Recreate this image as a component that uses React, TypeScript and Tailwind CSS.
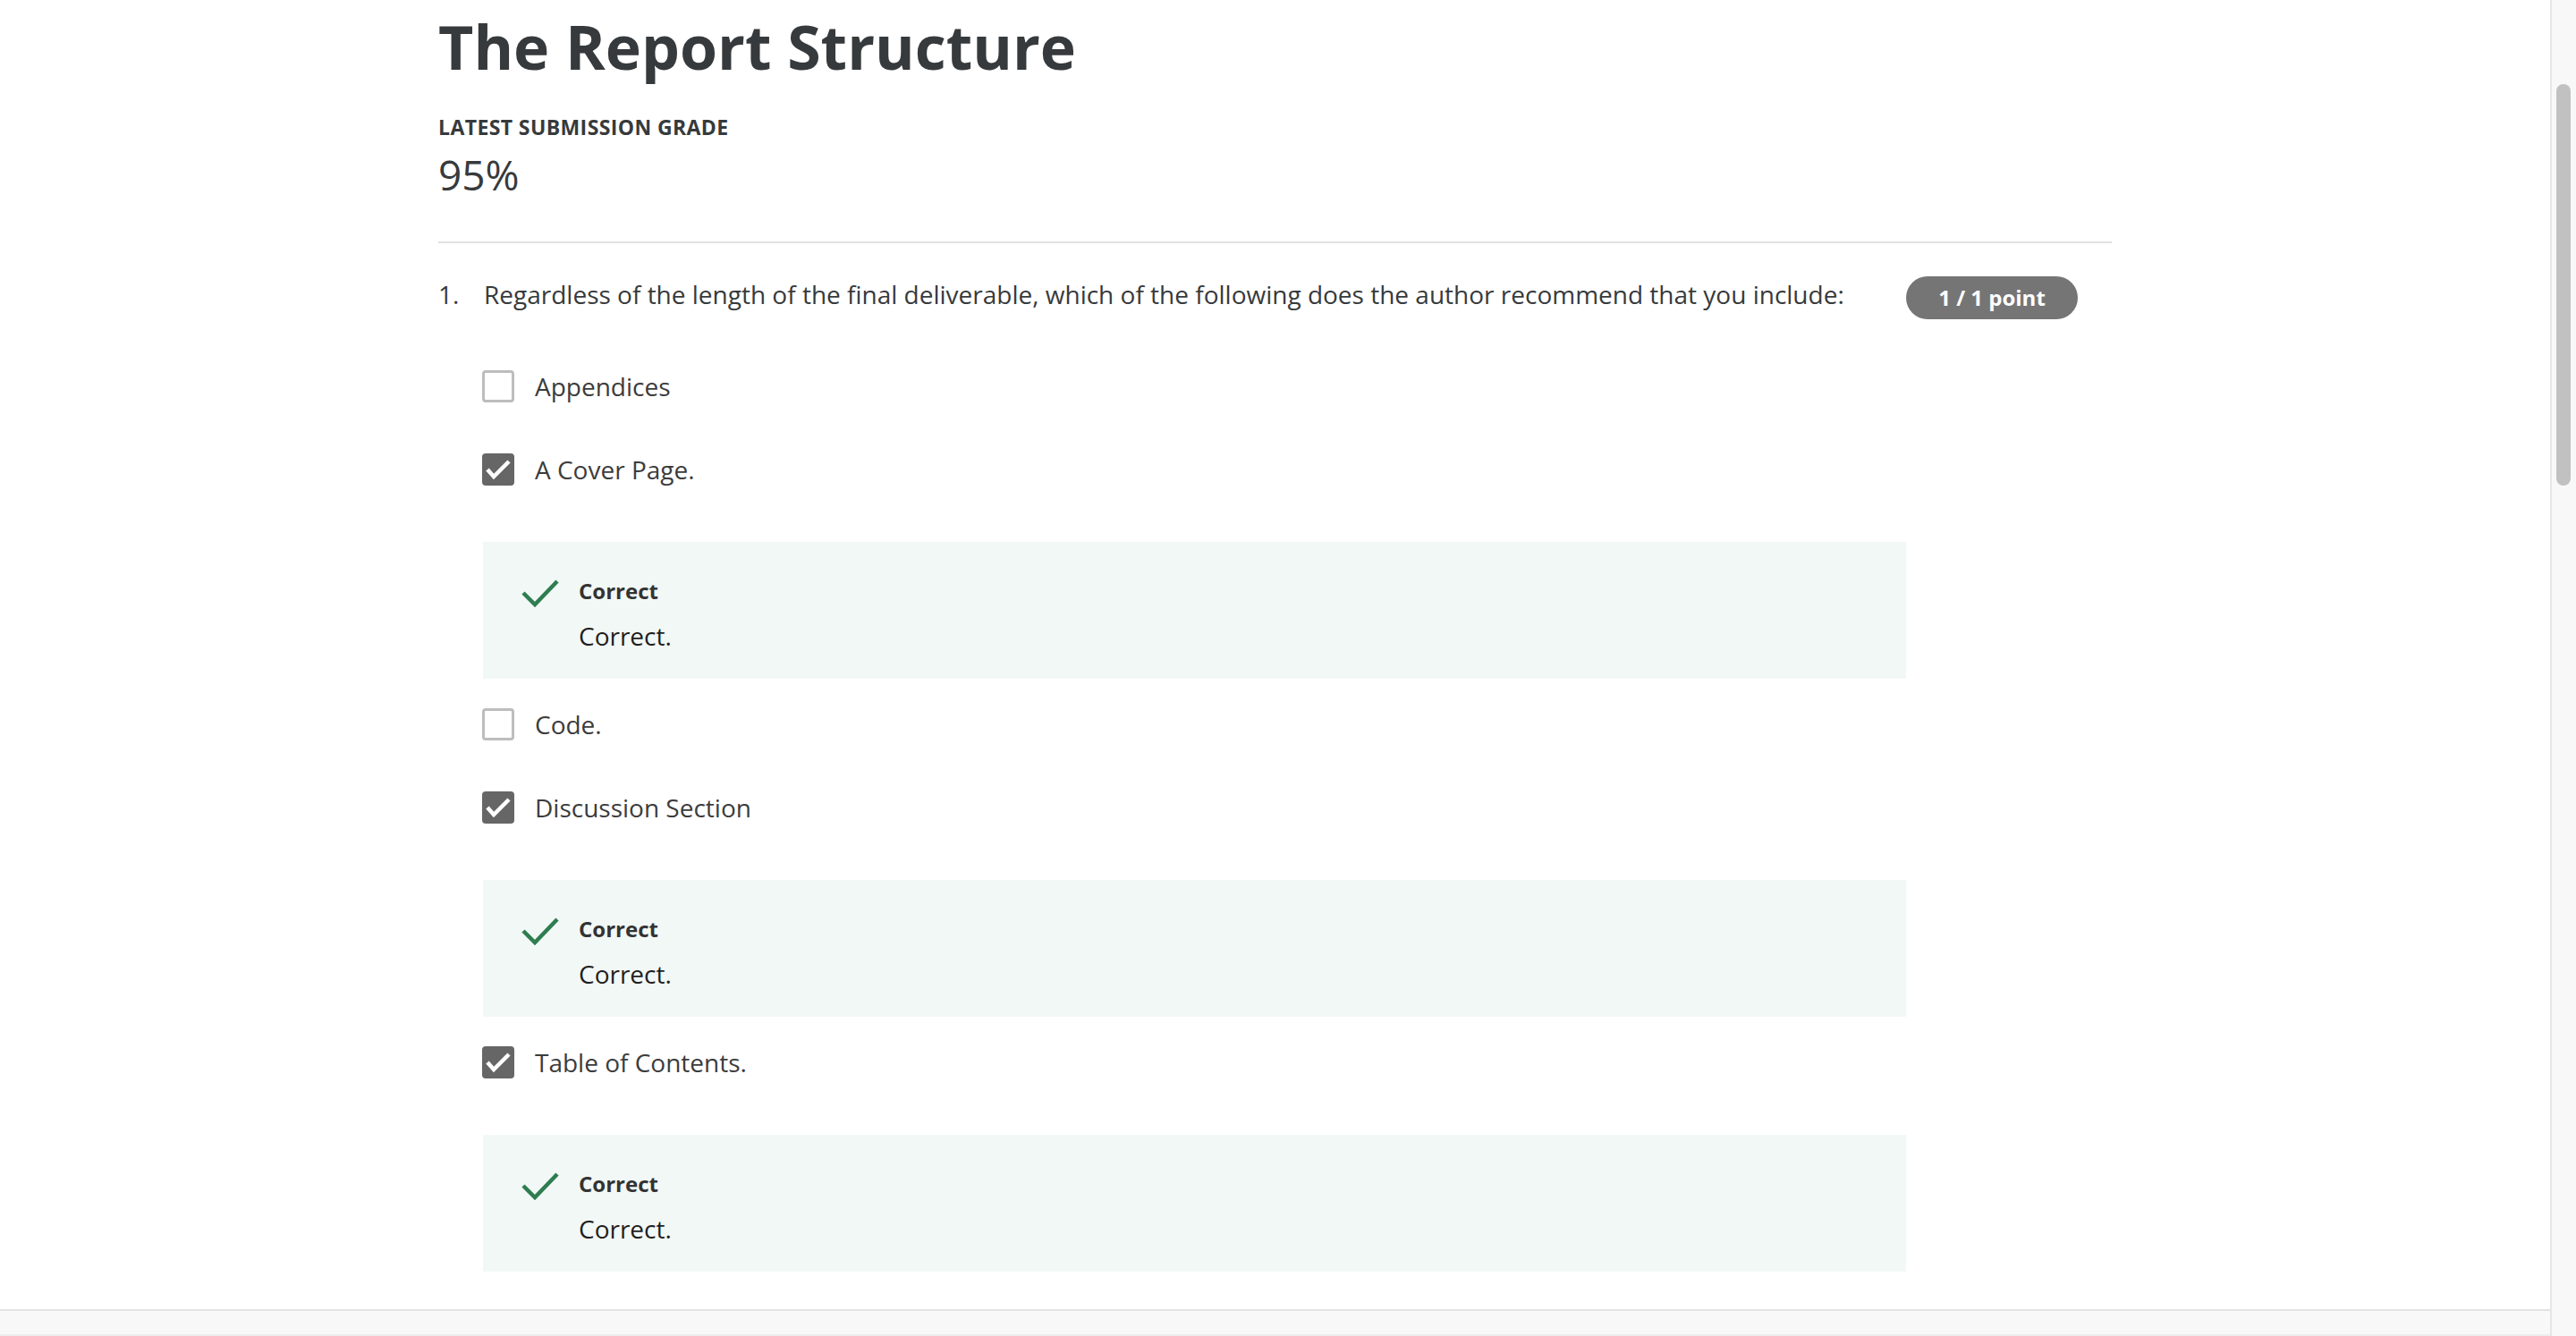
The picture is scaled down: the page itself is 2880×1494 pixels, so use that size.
import React from 'react';

interface OptionItem {
  label: string;
  checked: boolean;
  feedback?: string;
}

const options: OptionItem[] = [
  { label: 'Appendices', checked: false },
  { label: 'A Cover Page.', checked: true, feedback: 'Correct.' },
  { label: 'Code.', checked: false },
  { label: 'Discussion Section', checked: true, feedback: 'Correct.' },
  { label: 'Table of Contents.', checked: true, feedback: 'Correct.' },
];

const Checkbox: React.FC<{ checked: boolean }> = ({ checked }) =>
  checked ? (
    <div className="w-[36px] h-[36px] shrink-0 rounded-[4px] bg-[#666666] flex items-center justify-center">
      <svg width="36" height="36" viewBox="0 0 36 36">
        <polyline points="6,18 13,26 30,9" fill="none" stroke="#ffffff" strokeWidth="4.5" />
      </svg>
    </div>
  ) : (
    <div className="w-[36px] h-[36px] shrink-0 rounded-[4px] border-[3px] border-[#bdbdbd] bg-white" />
  );

const Feedback: React.FC<{ text: string }> = ({ text }) => (
  <div className="mt-[61px] mb-[31px] ml-[1px] w-[1591px] bg-[#f2f8f6] pt-[39px] pb-[28px] pl-[43px] flex gap-[22px]">
    <svg width="42" height="32" viewBox="0 0 42 32" className="shrink-0 mt-[2px]">
      <polyline points="2,16 15,29 40,3" fill="none" stroke="#2e7d50" strokeWidth="4.5" />
    </svg>
    <div className="flex flex-col">
      <span className="text-[24px] leading-[32px] font-bold text-[#333333]">Correct</span>
      <span className="mt-[14px] text-[28px] leading-[40px] text-[#1f1f1f]">{text}</span>
    </div>
  </div>
);

export default function App() {
  return (
    <div className="w-[2880px] h-[1494px] overflow-hidden flex bg-white font-['Open_Sans',sans-serif]">
      <div className="w-[2851px] h-full flex flex-col">
        <main className="h-[1464px] overflow-hidden">
          <div className="w-[1871px] mx-auto">
            <h1 className="mt-[10px] text-[68px] leading-[84px] font-bold text-[#373a3c]">The Report Structure</h1>
            <div className="mt-[33px] text-[23px] leading-[30px] tracking-[0.4px] font-bold text-[#373a3c] uppercase">
              Latest Submission Grade
            </div>
            <div className="mt-[8px] text-[46px] leading-[60px] text-[#373a3c]">95%</div>
            <div className="mt-[45px] h-[2px] bg-[#e1e1e1]" />

            <div className="mt-[37px] flex items-start">
              <div className="flex-1">
                <div className="flex text-[28px] leading-[40px] text-[#373a3c]">
                  <span className="w-[51px] shrink-0">1.</span>
                  <span>
                    Regardless of the length of the final deliverable, which of the following does the author recommend that you include:
                  </span>
                </div>
                <div className="mt-[63px] pl-[49px]">
                  {options.map((o) => (
                    <div key={o.label} className={o.feedback ? '' : 'mb-[53px]'}>
                      <div className="flex items-center gap-[23px] h-[40px]">
                        <Checkbox checked={o.checked} />
                        <span className="text-[28px] leading-[40px] text-[#3c3c3c]">{o.label}</span>
                      </div>
                      {o.feedback && <Feedback text={o.feedback} />}
                    </div>
                  ))}
                </div>
              </div>
              <div className="w-[230px] shrink-0 flex">
                <div className="w-[192px] h-[48px] rounded-full bg-[#757575] flex items-center justify-center text-white text-[24px] font-bold">
                  1 / 1 point
                </div>
              </div>
            </div>
          </div>
        </main>
        <div className="h-[30px] border-t-2 border-[#e3e3e3] bg-[#f8f8f8] border-b-2 border-b-[#ececec]" />
      </div>
      <div className="w-[29px] h-full border-l-2 border-[#e6e6e6] bg-[#f8f8f8] pl-[5px] pt-[94px]">
        <div className="w-[16px] h-[449px] rounded-full bg-[#c1c1c1]" />
      </div>
    </div>
  );
}
